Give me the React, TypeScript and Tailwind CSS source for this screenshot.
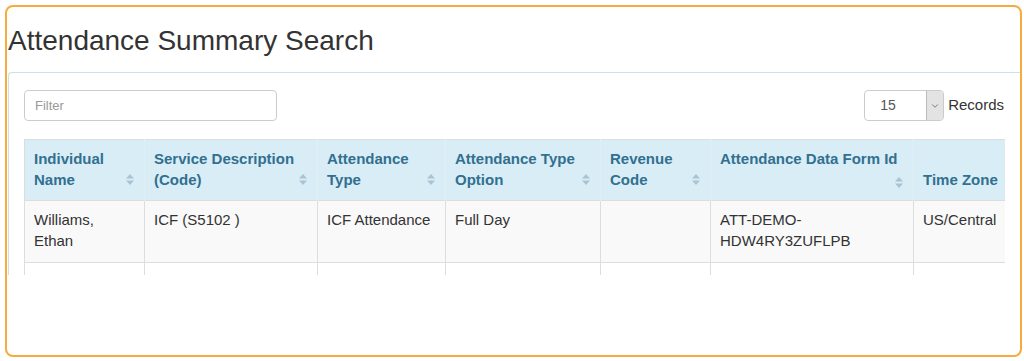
import { ChevronDown } from 'lucide-react';

interface Column {
  label: string;
  width: string;
  sort: boolean;
}

const columns: Column[] = [
  { label: 'Individual Name', width: 'w-[120px]', sort: true },
  { label: 'Service Description (Code)', width: 'w-[173px]', sort: true },
  { label: 'Attendance Type', width: 'w-[128px]', sort: true },
  { label: 'Attendance Type Option', width: 'w-[155px]', sort: true },
  { label: 'Revenue Code', width: 'w-[110px]', sort: true },
  { label: 'Attendance Data Form Id', width: 'w-[203px]', sort: true },
  { label: 'Time Zone', width: 'w-[130px]', sort: false },
];

const rows = [
  ['Williams, Ethan', 'ICF (S5102 )', 'ICF Attendance', 'Full Day', '', 'ATT-DEMO-HDW4RY3ZUFLPB', 'US/Central'],
  ['', '', '', '', '', '', ''],
];

function SortIcon({ low }: { low?: boolean }) {
  return (
    <svg
      width="8"
      height="11"
      viewBox="0 0 8 11"
      className={low ? 'absolute right-[10px] bottom-[12px]' : 'absolute right-[10px] bottom-[15px]'}
    >
      <path d="M4 0 L8 4.5 L0 4.5 Z" fill="#a9c3d3" />
      <path d="M4 11 L8 6.5 L0 6.5 Z" fill="#a9c3d3" />
    </svg>
  );
}

export default function App() {
  return (
    <div className="w-[1024px] h-[361px] bg-white pt-[5px] pl-[5px] font-['Liberation_Sans',Arial,sans-serif] text-[#333]">
      <div className="w-[1017px] h-[352px] border-2 border-[#f6ab3c] rounded-lg overflow-hidden">
        {/* Title */}
        <h1 className="text-[28px] leading-[30px] pl-px mt-[19px] mb-[16px]">Attendance Summary Search</h1>

        {/* Panel */}
        <div className="ml-px h-[203px] overflow-hidden border-t border-l border-[#c5e3ec] rounded-tl-[4px] pl-[15px] pr-[15px] pt-[17px]">
          <div className="flex justify-between items-center mb-[18px]">
            <div className="w-[253px] h-[31px] border border-[#ccc] rounded-[4px] px-[10px] flex items-center text-[13px] text-[#999]">
              Filter
            </div>
            <div className="flex items-center gap-[4px] mr-px">
              <div className="w-[80px] h-[31px] border border-[#ccc] rounded-[4px] flex overflow-hidden">
                <div className="flex-1 flex items-center pl-[15px] text-[14px] text-[#555]">15</div>
                <div className="w-[17px] bg-[#e3e3e3] border-l border-[#bbb] flex items-center justify-center">
                  <ChevronDown size={10} strokeWidth={2} color="#666" />
                </div>
              </div>
              <span className="text-[15px]">Records</span>
            </div>
          </div>

          {/* Table */}
          <div className="overflow-hidden">
            <table className="w-[1019px] table-fixed border-collapse border-l border-t border-[#ddd] text-[15px] leading-[21px]">
              <thead>
                <tr className="bg-[#d9edf7] h-[61px]">
                  {columns.map((c) => {
                    const twoLine = c.label === 'Attendance Data Form Id';
                    return (
                      <th
                        key={c.label}
                        className={`${c.width} relative align-bottom text-left font-bold text-[#31708f] pl-[9px] pr-[14px] pb-[10px] border-r border-[#e4eff5]`}
                      >
                        {c.label}
                        {twoLine && <br />}
                        {twoLine && <span>&nbsp;</span>}
                        {c.sort && <SortIcon low={twoLine} />}
                      </th>
                    );
                  })}
                </tr>
              </thead>
              <tbody>
                {rows.map((r, i) => (
                  <tr key={i} className={i === 0 ? 'bg-[#f9f9f9] h-[62px]' : 'bg-white h-[62px]'}>
                    {r.map((v, j) => (
                      <td key={j} className="align-top pl-[9px] pr-[8px] pt-[8px] border-t border-r border-[#ddd] break-words">
                        {j === 5 && v ? (
                          <>
                            ATT-DEMO-
                            <br />
                            HDW4RY3ZUFLPB
                          </>
                        ) : (
                          v
                        )}
                      </td>
                    ))}
                  </tr>
                ))}
              </tbody>
            </table>
          </div>
        </div>
      </div>
    </div>
  );
}
